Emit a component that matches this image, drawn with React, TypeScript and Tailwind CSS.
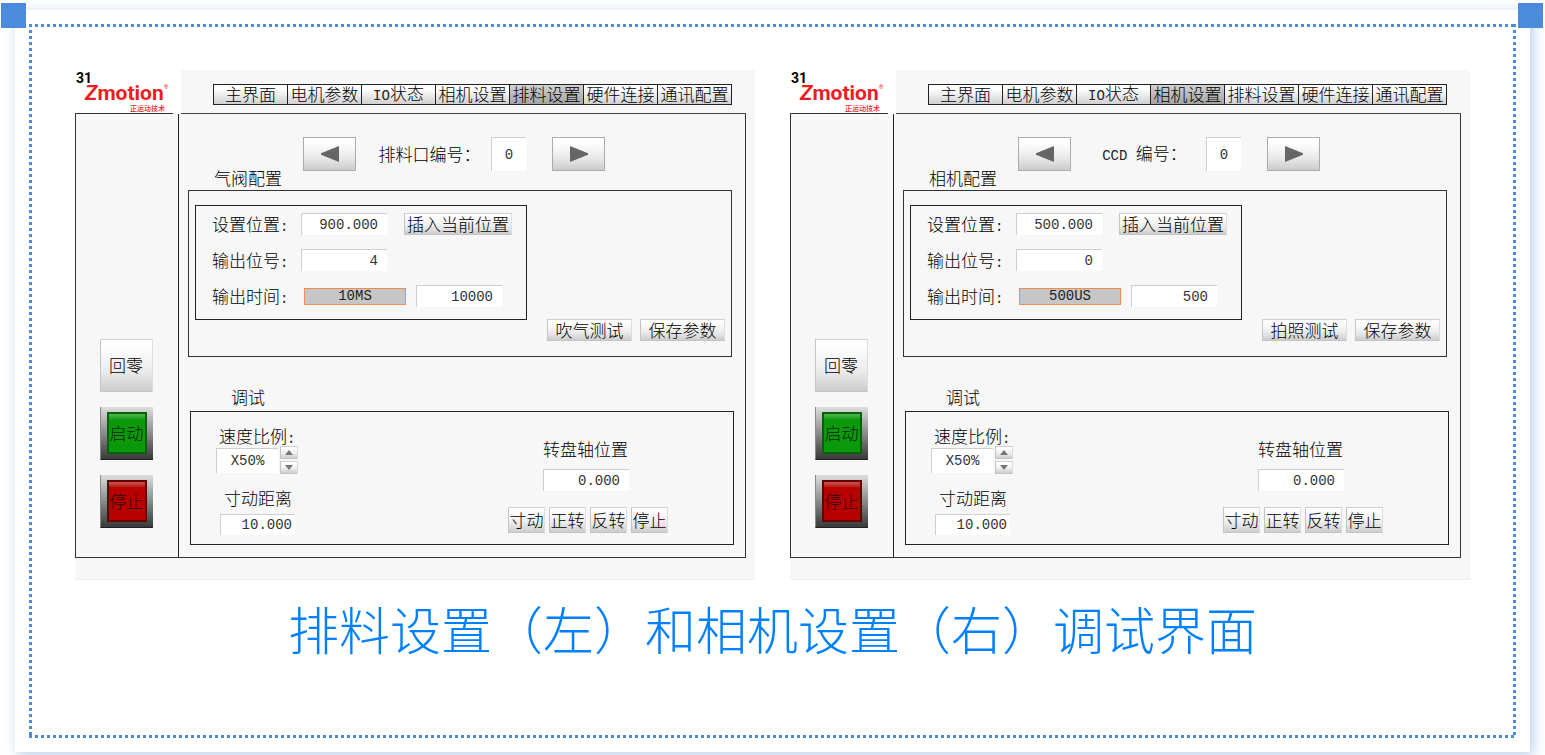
import clsx from 'clsx';
import type { ReactNode } from 'react';

interface PanelConfig {
  id: string;
  activeTab: string;
  indexPrefix: string;
  indexLabel: string;
  groupTitle: string;
  position: string;
  bit: string;
  timeUnit: string;
  time: string;
  testLabel: string;
}

const TABS = ['主界面', '电机参数', 'IO状态', '相机设置', '排料设置', '硬件连接', '通讯配置'];

const PANELS: PanelConfig[] = [
  {
    id: 'discharge',
    activeTab: '排料设置',
    indexPrefix: '',
    indexLabel: '排料口编号',
    groupTitle: '气阀配置',
    position: '900.000',
    bit: '4',
    timeUnit: '10MS',
    time: '10000',
    testLabel: '吹气测试',
  },
  {
    id: 'camera',
    activeTab: '相机设置',
    indexPrefix: 'CCD ',
    indexLabel: '编号',
    groupTitle: '相机配置',
    position: '500.000',
    bit: '0',
    timeUnit: '500US',
    time: '500',
    testLabel: '拍照测试',
  },
];

function Mono({ children }: { children: ReactNode }) {
  return (
    <span className="whitespace-pre font-['Liberation_Mono',monospace] text-[14px] leading-none text-[#222]">
      {children}
    </span>
  );
}

function Field({ id, value, className }: { id: string; value: string; className?: string }) {
  return (
    <input
      id={id}
      defaultValue={value}
      className={clsx(
        "min-w-0 border-l border-t border-[#cfcfcf] bg-white font-['Liberation_Mono',monospace] text-[14px] text-[#333] outline-none",
        className,
      )}
    />
  );
}

function PlainButton({ children, className }: { children: ReactNode; className?: string }) {
  return (
    <button
      type="button"
      className={clsx(
        'flex shrink-0 items-center justify-center whitespace-nowrap border border-b-[#c4c4c4] border-l-[#c4c4c4] border-r-[#dedede] border-t-[#d0d0d0] bg-linear-to-b from-white from-10% via-[#ececec] via-60% to-[#cdcdcd]',
        className,
      )}
    >
      {children}
    </button>
  );
}

function ArrowButton({ dir }: { dir: 'prev' | 'next' }) {
  return (
    <button
      type="button"
      aria-label={dir}
      className="flex h-[34px] w-[53px] shrink-0 items-center justify-center border border-[#ababab] bg-linear-to-b from-white from-15% via-[#eaeaea] via-60% to-[#cccccc]"
    >
      <svg width="18" height="16" viewBox="0 0 18 16" fill="#666">
        <path d={dir === 'prev' ? 'M18 0v16L0 8.700V7.300z' : 'M0 0v16l18-7.300V7.300z'} />
      </svg>
    </button>
  );
}

function LampButton({ label, color }: { label: string; color: 'green' | 'red' }) {
  return (
    <button
      type="button"
      className="size-[53px] border-b border-l border-b-[#222] border-l-[#888] bg-linear-to-b from-[#dedede] via-[#8c8c8c] via-50% to-[#3a3a3a] px-[6px] py-[5px]"
    >
      <span
        className={clsx(
          'flex size-full items-center justify-center whitespace-nowrap border-2 pb-[2px] text-black/80',
          color === 'green'
            ? 'border-[#07600a] bg-linear-to-b from-[#4fb84f] to-[#0b980b] to-15%'
            : 'border-[#640404] bg-linear-to-b from-[#cf5050] to-[#b80000] to-15%',
        )}
      >
        {label}
      </span>
    </button>
  );
}

function Logo() {
  return (
    <div className="flex w-[106px] shrink-0 flex-col bg-white">
      <div className="h-[43px] font-['Roboto',sans-serif]">
        <div className="pl-px pt-[2px] text-[14px] font-bold leading-[12px] text-black">31</div>
        <div className="flex pl-[10px] text-[21px] font-bold leading-[18px] text-[#ee1c25]">
          <span className="italic">Z</span>
          <span>motion</span>
          <span className="text-[6px] leading-[6px]">®</span>
        </div>
        <div className="pl-[55px] pt-[2px] font-['Noto_Sans_CJK_SC',sans-serif] text-[7px] font-medium leading-[8px] text-[#ee1c25]">
          正运动技术
        </div>
      </div>
      <div className="h-px w-[98px] bg-[#333]" />
    </div>
  );
}

function Tabs({ active }: { active: string }) {
  return (
    <nav className="flex flex-1 border-b border-[#444] pl-[32px] pr-[14px] pt-[14px]">
      {TABS.map((tab) => (
        <button
          key={tab}
          type="button"
          className={clsx(
            'flex h-[21px] flex-1 items-center justify-center whitespace-nowrap border-y border-r border-[#222] bg-linear-to-b pb-[2px] first:border-l',
            tab === active ? 'from-[#d2d2d2] to-[#a4a4a4]' : 'from-white from-20% to-[#d0d0d0]',
          )}
        >
          {tab === 'IO状态' ? (
            <span>
              <Mono>IO</Mono>状态
            </span>
          ) : (
            tab
          )}
        </button>
      ))}
    </nav>
  );
}

function RowLabel({ htmlFor, children }: { htmlFor: string; children: ReactNode }) {
  return (
    <label htmlFor={htmlFor} className="w-[89px] shrink-0 whitespace-nowrap">
      {children}
      <Mono>:</Mono>
    </label>
  );
}

function ConfigGroup({ panel }: { panel: PanelConfig }) {
  return (
    <section className="ml-[9px] mr-[13px] flex flex-col border border-[#333] pb-[15px] pl-[6px] pr-[6px] pt-[14px]">
      <div className="flex h-[115px] w-[332px] flex-col gap-[14px] border border-[#222] pl-[16px] pt-[7px]">
        <div className="flex h-[22px] items-center">
          <RowLabel htmlFor={`${panel.id}-position`}>设置位置</RowLabel>
          <Field id={`${panel.id}-position`} value={panel.position} className="h-[22px] w-[86px] pr-[9px] text-right" />
          <PlainButton className="ml-[17px] h-[22px] w-[108px] pb-[2px]">插入当前位置</PlainButton>
        </div>
        <div className="flex h-[22px] items-center">
          <RowLabel htmlFor={`${panel.id}-bit`}>输出位号</RowLabel>
          <Field id={`${panel.id}-bit`} value={panel.bit} className="h-[22px] w-[86px] pr-[9px] text-right" />
        </div>
        <div className="flex h-[22px] items-center">
          <RowLabel htmlFor={`${panel.id}-time`}>输出时间</RowLabel>
          <button
            type="button"
            className="ml-[3px] flex h-[17px] w-[102px] items-center justify-center border border-[#ff8a50] bg-[#c6c6c6]"
          >
            <Mono>{panel.timeUnit}</Mono>
          </button>
          <Field id={`${panel.id}-time`} value={panel.time} className="ml-[10px] h-[22px] w-[86px] pr-[9px] text-right" />
        </div>
      </div>
      <div className="-mt-px flex justify-end gap-[8px]">
        <PlainButton className="h-[22px] w-[85px] pb-[2px]">{panel.testLabel}</PlainButton>
        <PlainButton className="h-[22px] w-[85px] pb-[2px]">保存参数</PlainButton>
      </div>
    </section>
  );
}

function SpinButton({ dir }: { dir: 'up' | 'down' }) {
  return (
    <PlainButton className="h-[13px] w-[18px]">
      <svg width="8" height="5" viewBox="0 0 8 5" fill="#777" aria-label={dir}>
        <path d={dir === 'up' ? 'M0 5h8L4 0z' : 'M0 0h8L4 5z'} />
      </svg>
    </PlainButton>
  );
}

function DebugGroup({ id }: { id: string }) {
  return (
    <section className="ml-[11px] mr-[11px] flex h-[134px] justify-between border border-[#222] pl-[25px] pr-[65px]">
      <div className="flex flex-col items-start pt-[15px]">
        <label htmlFor={`${id}-ratio`} className="ml-[3px] h-[17px] whitespace-nowrap">
          速度比例<Mono>:</Mono>
        </label>
        <div className="mt-[2px] flex h-[28px] items-center gap-[2px]">
          <Field id={`${id}-ratio`} value="X50%" className="h-[25px] w-[62px] text-center" />
          <div className="flex flex-col gap-[2px]">
            <SpinButton dir="up" />
            <SpinButton dir="down" />
          </div>
        </div>
        <label htmlFor={`${id}-step`} className="ml-[8px] mt-[15px] h-[17px]">
          寸动距离
        </label>
        <Field id={`${id}-step`} value="10.000" className="ml-[4px] mt-[8px] h-[21px] w-[75px] pr-[3px] text-right" />
      </div>
      <div className="flex flex-col pt-[28px]">
        <label htmlFor={`${id}-axis`} className="ml-[35px] h-[17px]">
          转盘轴位置
        </label>
        <Field id={`${id}-axis`} value="0.000" className="ml-[35px] mt-[12px] h-[22px] w-[86px] pr-[9px] text-right" />
        <div className="mt-[16px] flex gap-[4px]">
          {['寸动', '正转', '反转', '停止'].map((label) => (
            <PlainButton key={label} className="h-[26px] w-[37px] pb-[2px]">
              {label}
            </PlainButton>
          ))}
        </div>
      </div>
    </section>
  );
}

function HmiPanel({ panel }: { panel: PanelConfig }) {
  return (
    <article className="min-w-[680px] flex-1 border-b border-[#eee] bg-[#f7f7f7] pb-[21px] pr-[9px] font-['Noto_Sans_CJK_SC',sans-serif] text-[17px] font-light leading-[17px] text-black">
      <header className="flex h-[44px]">
        <Logo />
        <Tabs active={panel.activeTab} />
      </header>
      <div className="flex border-b border-l border-r border-[#333]">
        <aside className="flex w-[103px] shrink-0 flex-col items-center justify-end gap-[15px] border-r border-[#222] pb-[29px] pr-[2px]">
          <PlainButton className="size-[53px] pb-[2px]">回零</PlainButton>
          <LampButton label="启动" color="green" />
          <LampButton label="停止" color="red" />
        </aside>
        <main className="flex-1 pb-[12px] pt-[23px]">
          <div className="flex pl-[124px]">
            <ArrowButton dir="prev" />
            <label
              htmlFor={`${panel.id}-index`}
              className="flex w-[135px] items-center justify-center pb-px pl-[12px]"
            >
              <span className="whitespace-nowrap">
                {panel.indexPrefix && <Mono>{panel.indexPrefix}</Mono>}
                {panel.indexLabel}：
              </span>
            </label>
            <Field id={`${panel.id}-index`} value="0" className="h-[34px] w-[35px] text-center" />
            <div className="ml-[26px]">
              <ArrowButton dir="next" />
            </div>
          </div>
          <h2 className="-mt-[2px] mb-[4px] pl-[35px]">{panel.groupTitle}</h2>
          <ConfigGroup panel={panel} />
          <h2 className="mb-[6px] mt-[31px] pl-[52px]">调试</h2>
          <DebugGroup id={panel.id} />
        </main>
      </div>
    </article>
  );
}

// Square dots on all four sides, 3px on and 3px off.
function DottedFrame({ children }: { children: ReactNode }) {
  return (
    <div className="bg-[repeating-linear-gradient(90deg,#4a8bdc_0_3px,transparent_3px_6px),repeating-linear-gradient(90deg,#4a8bdc_0_3px,transparent_3px_6px),repeating-linear-gradient(180deg,#4a8bdc_0_3px,transparent_3px_6px),repeating-linear-gradient(180deg,#4a8bdc_0_3px,transparent_3px_6px)] bg-[position:left_top,left_bottom,left_top,right_top] bg-[size:100%_3px,100%_3px,3px_100%,3px_100%] bg-no-repeat px-[46px] pb-[80px] pt-[46px]">
      {children}
    </div>
  );
}

export default function App() {
  return (
    <div className="relative bg-white pb-[3px] pl-[15px] pr-[15px] pt-[10px]">
      <div className="bg-white p-[14px] shadow-[3px_3px_12px_rgba(74,132,205,0.4)]">
        <DottedFrame>
          <div className="flex gap-[35px]">
            {PANELS.map((panel) => (
              <HmiPanel key={panel.id} panel={panel} />
            ))}
          </div>
          <p className="mt-[18px] text-center font-['Noto_Sans_CJK_SC',sans-serif] text-[51px] font-light leading-[60px] text-[#0080ff]">
            排料设置（左）和相机设置（右）调试界面
          </p>
        </DottedFrame>
      </div>
      <div className="absolute left-px top-[3px] size-[25px] bg-[#4a8bdc]" />
      <div className="absolute right-[2px] top-[3px] size-[25px] bg-[#4a8bdc]" />
    </div>
  );
}
